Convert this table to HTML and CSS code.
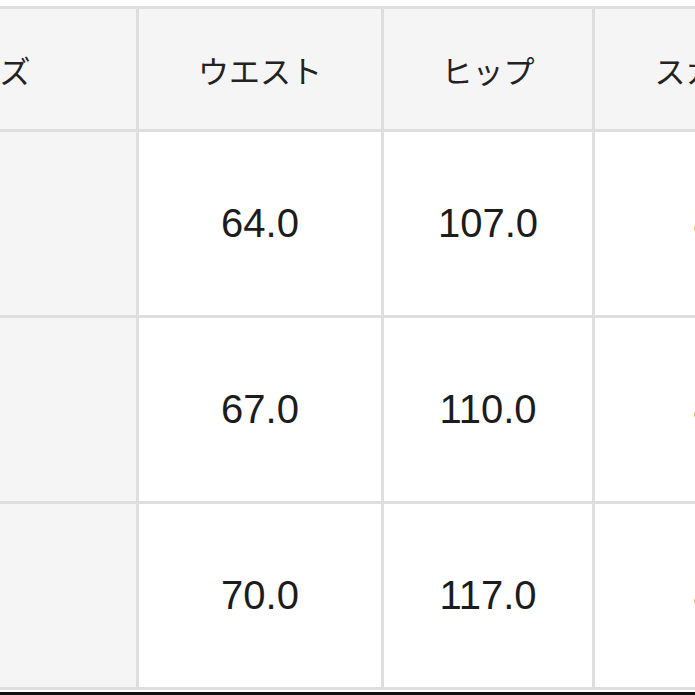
FILE: index.html
```html
<!DOCTYPE html>
<html lang="ja">
<head>
<meta charset="utf-8">
<link rel="stylesheet" href="styles.css">
</head>
<body>
<div class="page">
  <div class="grid">
    <div class="cell head">サイズ</div>
    <div class="cell head">ウエスト</div>
    <div class="cell head">ヒップ</div>
    <div class="cell head">スカート丈</div>

    <div class="cell label"></div>
    <div class="cell num">64.0</div>
    <div class="cell num">107.0</div>
    <div class="cell num">80.0</div>

    <div class="cell label"></div>
    <div class="cell num">67.0</div>
    <div class="cell num">110.0</div>
    <div class="cell num">82.0</div>

    <div class="cell label"></div>
    <div class="cell num">70.0</div>
    <div class="cell num">117.0</div>
    <div class="cell num">84.0</div>
  </div>
</div>
</body>
</html>
```

FILE: styles.css
```css
html, body {
  margin: 0;
  padding: 0;
  background: #111;
  height: 695px;
  overflow: hidden;
}
.page {
  background: #ffffff;
  height: 692px;
  overflow: hidden;
  padding-top: 6px;
  box-sizing: border-box;
}
.grid {
  display: grid;
  grid-template-columns: 303px 242px 208px 274px;
  grid-template-rows: 120px 183px 183px 183px;
  gap: 3px;
  padding: 3px;
  background: #dedede;
  margin-left: -170px;
  width: max-content;
}
.cell {
  display: flex;
  align-items: center;
  justify-content: center;
  background: #ffffff;
  color: #1c1c1c;
  font-family: "Liberation Sans", "Noto Sans CJK JP", sans-serif;
  white-space: nowrap;
}
.head {
  background: #f5f5f5;
  font-size: 31px;
  font-family: "Noto Sans CJK JP", sans-serif;
  font-weight: 400;
  color: #222;
}
.label {
  background: #f5f5f5;
}
.num {
  font-size: 40px;
}
```
